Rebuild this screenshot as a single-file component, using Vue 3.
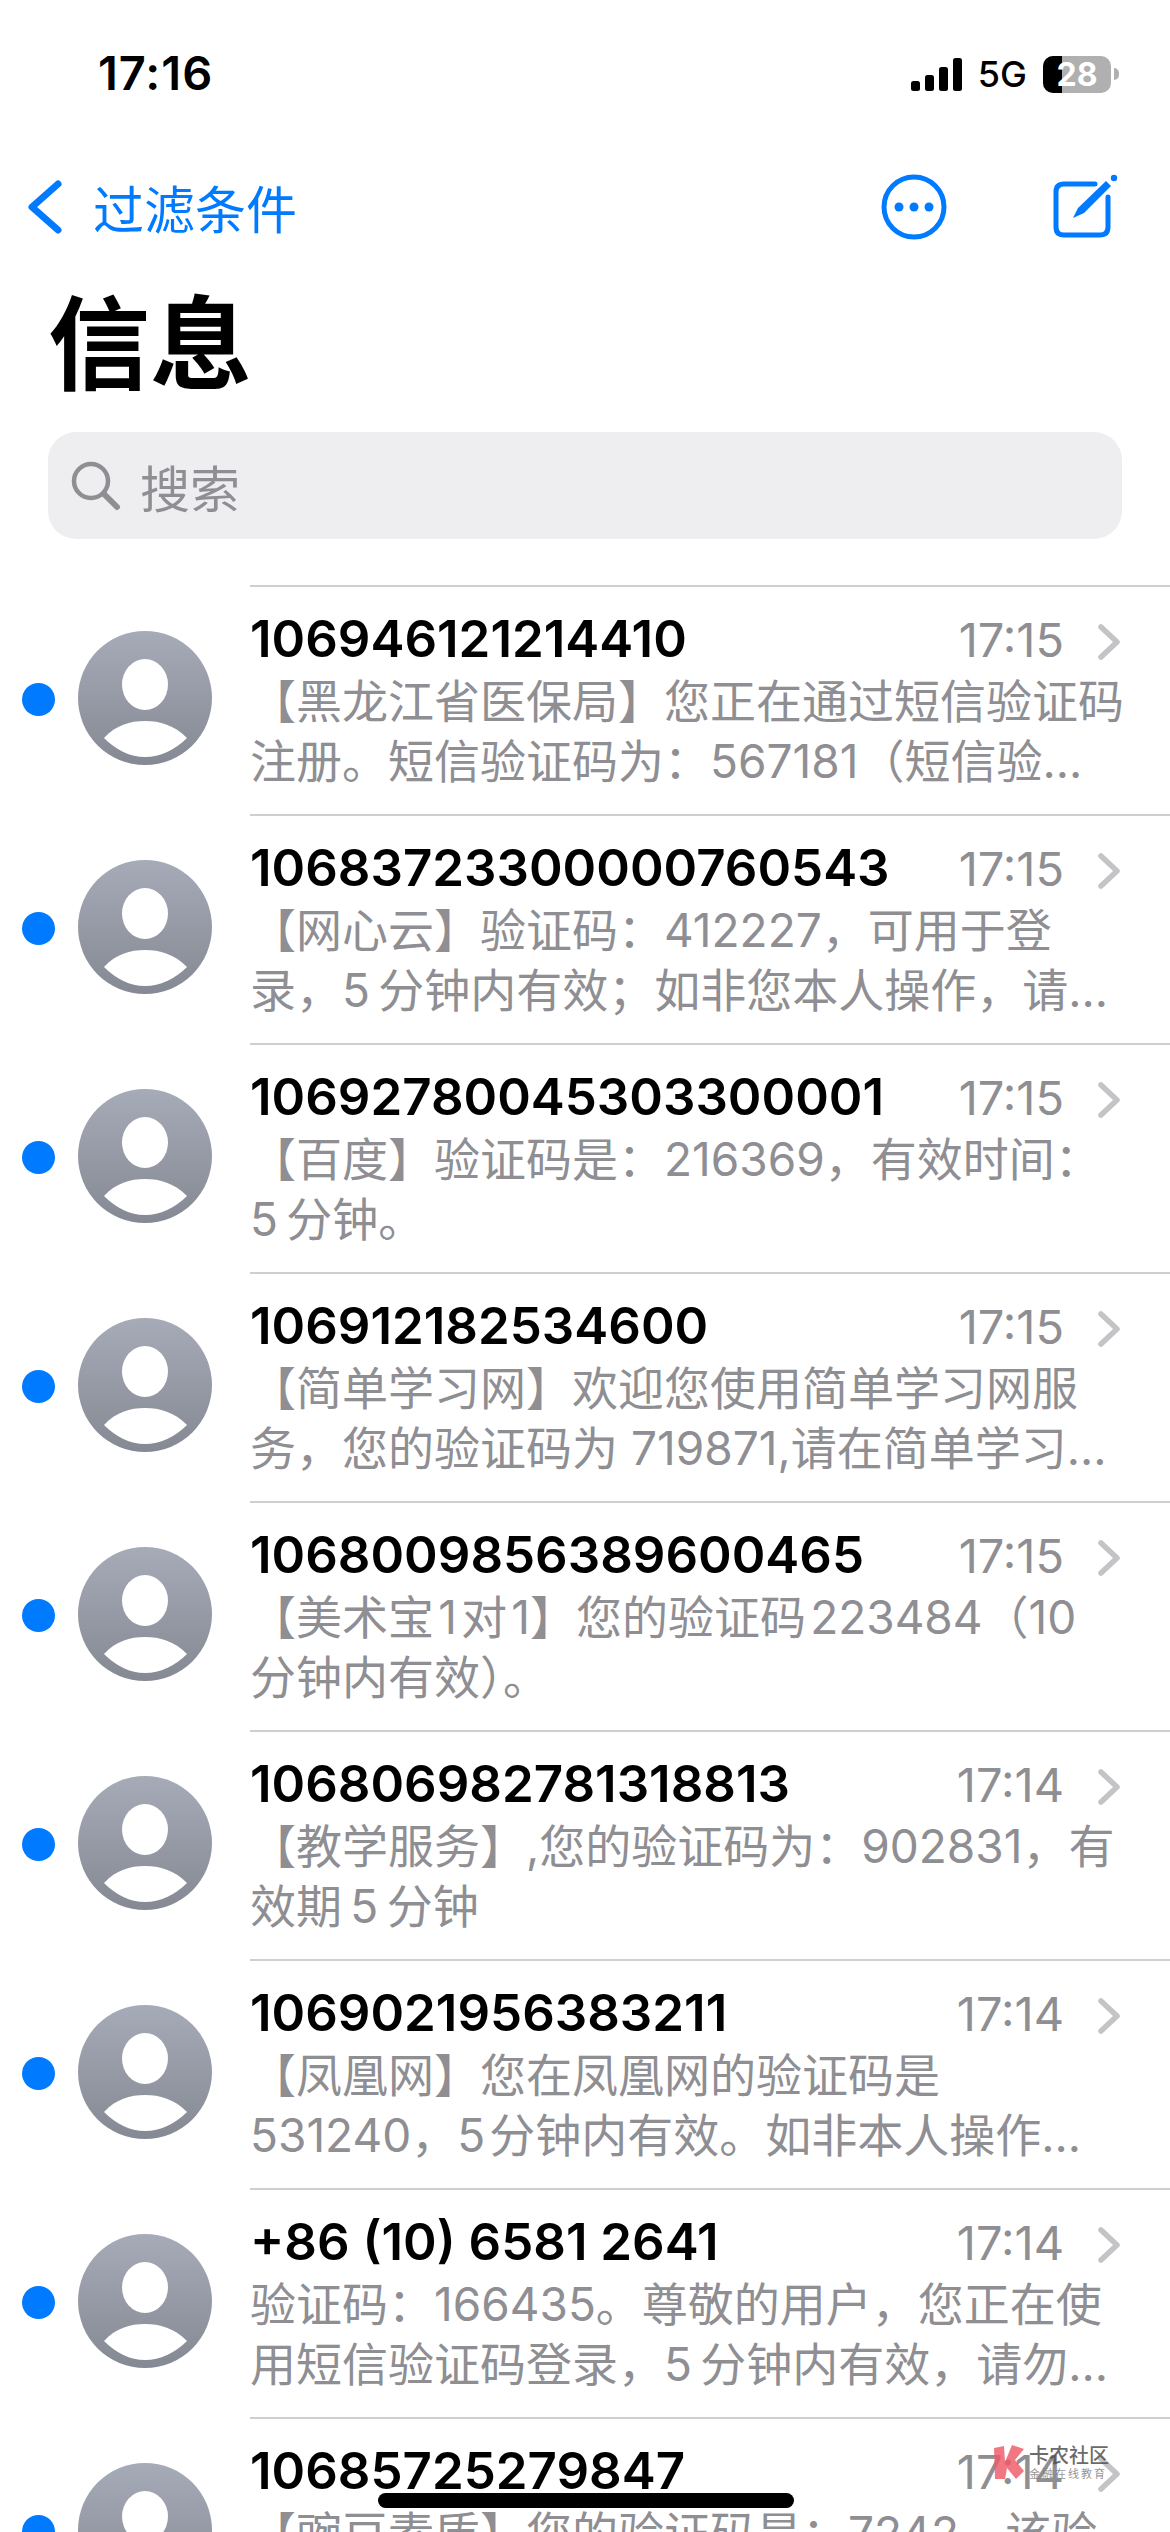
<script setup>
const rows = [
  { name: '106946121214410', time: '17:15', lines: ['【黑龙江省医保局】您正在通过短信验证码', '注册。短信验证码为：567181（短信验…'] },
  { name: '10683723300000760543', time: '17:15', lines: ['【网心云】验证码：412227，可用于登', '录，5\u2009分钟内有效；如非您本人操作，请…'] },
  { name: '10692780045303300001', time: '17:15', lines: ['【百度】验证码是：216369，有效时间：', '5\u2009分钟。'] },
  { name: '106912182534600', time: '17:15', lines: ['【简单学习网】欢迎您使用简单学习网服', '务，您的验证码为 719871,请在简单学习…'] },
  { name: '1068009856389600465', time: '17:15', lines: ['【美术宝\u200a1\u200a对\u200a1】您的验证码\u200a223484（10', '分钟内有效）。'] },
  { name: '106806982781318813', time: '17:14', lines: ['【教学服务】,您的验证码为：902831，有', '效期\u20095\u2009分钟'] },
  { name: '1069021956383211', time: '17:14', lines: ['【凤凰网】您在凤凰网的验证码是', '531240，5\u200a分钟内有效。如非本人操作…'] },
  { name: '+86 (10) 6581 2641', time: '17:14', lines: ['验证码：166435。尊敬的用户，您正在使', '用短信验证码登录，5\u2009分钟内有效，请勿…'] },
  { name: '10685725279847', time: '17:14', lines: ['【豌豆素质】您的验证码是：7242，该验'] },
]
</script>

<template>
  <div class="screen">
    <header class="status">
      <span class="clock">17:16</span>
      <div class="status-right">
        <svg class="signal" width="52" height="34" viewBox="0 0 52 34">
          <rect x="0" y="24" width="9" height="10" rx="2.5" />
          <rect x="14" y="18" width="9" height="16" rx="2.5" />
          <rect x="28" y="10" width="9" height="24" rx="2.5" />
          <rect x="42" y="1" width="9" height="33" rx="2.5" />
        </svg>
        <span class="net">5G</span>
        <div class="battery">
          <div class="battery-fill"></div>
          <span class="battery-num">28</span>
        </div>
        <i class="battery-tip"></i>
      </div>
    </header>

    <nav class="nav">
      <div class="back">
        <svg width="40" height="64" viewBox="0 0 40 64" fill="none">
          <path d="M34 9 L8 32 L34 55" stroke="#007aff" stroke-width="7" stroke-linecap="round" stroke-linejoin="round" />
        </svg>
        <span>过滤条件</span>
      </div>
      <div class="nav-actions">
        <svg width="66" height="66" viewBox="0 0 66 66" fill="none">
          <circle cx="33" cy="33" r="30" stroke="#007aff" stroke-width="5" />
          <circle cx="18" cy="33" r="4.5" fill="#007aff" />
          <circle cx="33" cy="33" r="4.5" fill="#007aff" />
          <circle cx="48" cy="33" r="4.5" fill="#007aff" />
        </svg>
        <svg width="68" height="70" viewBox="0 0 68 70" fill="none">
          <path d="M44 12 H13 Q5 12 5 20 V55 Q5 63 13 63 H49 Q57 63 57 55 V25" stroke="#007aff" stroke-width="5" stroke-linecap="round" />
          <path d="M22 46 L27 36 L55 9 L60 14 L33 41 Z" fill="#007aff" />
          <circle cx="63" cy="6" r="3.2" fill="#007aff" />
        </svg>
      </div>
    </nav>

    <h1 class="title">信息</h1>

    <div class="search">
      <svg width="52" height="52" viewBox="0 0 52 52" fill="none">
        <circle cx="21" cy="21" r="17" stroke="#8e8e93" stroke-width="4.5" />
        <path d="M34 34 L47 47" stroke="#8e8e93" stroke-width="6" stroke-linecap="round" />
      </svg>
      <span>搜索</span>
    </div>

    <ul class="list">
      <li v-for="row in rows" :key="row.name" class="row">
        <i class="dot"></i>
        <svg class="avatar" width="134" height="134" viewBox="0 0 134 134">
          <defs>
            <linearGradient id="avatarFill" x1="0" y1="0" x2="0" y2="1">
              <stop offset="0" stop-color="#a6abb8" />
              <stop offset="1" stop-color="#858993" />
            </linearGradient>
          </defs>
          <circle cx="67" cy="67" r="67" fill="url(#avatarFill)" />
          <ellipse cx="67" cy="53.5" rx="23" ry="25.5" fill="#fff" />
          <path d="M26 107 C38 94 52 90 67 90 C82 90 96 94 109 107 C97 119 82 126 67 126 C52 126 38 119 26 107 Z" fill="#fff" />
        </svg>
        <div class="body">
          <div class="top">
            <span class="name">{{ row.name }}</span>
            <span class="time">{{ row.time }}</span>
            <svg class="chev" width="28" height="40" viewBox="0 0 28 40" fill="none">
              <path d="M5 5 L21 20 L5 35" stroke="#c4c4c7" stroke-width="5.5" stroke-linecap="round" stroke-linejoin="round" />
            </svg>
          </div>
          <p v-for="line in row.lines" :key="line" class="line">{{ line }}</p>
        </div>
      </li>
    </ul>

    <div class="home"></div>
    <div class="mark">
      <svg width="34" height="37" viewBox="0 0 34 37">
        <path d="M2 4 L12 2 L13 18 L20 1 L32 5 L23 16 L32 27 L24 35 L15 24 L13 35 L3 35 Z" fill="#ee5a66" opacity=".82" />
      </svg>
      <div class="mark-text">
        <b>卡农社区</b>
        <small>金融在线教育</small>
      </div>
    </div>
  </div>
</template>

<style>
html, body { margin: 0; background: #fff; }
</style>

<style scoped>
.screen {
  position: relative;
  width: 1170px;
  height: 2532px;
  overflow: hidden;
  background: #fff;
  font-family: Inter, "Noto Sans CJK SC", sans-serif;
  color: #000;
}
.status {
  height: 150px;
  box-sizing: border-box;
  padding: 46px 51px 0 98px;
  display: flex;
  justify-content: space-between;
  align-items: flex-start;
}
.clock { font-size: 47px; line-height: 54px; font-weight: 600; letter-spacing: 1px; }
.status-right { display: flex; align-items: center; height: 56px; }
.signal { fill: #000; margin-right: 15px; }
.net { font-size: 36px; font-weight: 500; margin-right: 16px; }
.battery {
  position: relative;
  width: 68px;
  height: 37px;
  border-radius: 10px;
  background: #b0b0b0;
  overflow: hidden;
}
.battery-fill { width: 19px; height: 100%; background: #000; }
.battery-num {
  position: absolute;
  inset: 0;
  color: #fff;
  font-size: 32px;
  line-height: 37px;
  font-weight: 700;
  text-align: center;
}
.battery-tip {
  width: 5px;
  height: 12px;
  margin-left: 3px;
  border-radius: 0 6px 6px 0;
  background: #b0b0b0;
}
.nav {
  height: 114px;
  box-sizing: border-box;
  padding: 0 51px 0 24px;
  display: flex;
  justify-content: space-between;
  align-items: center;
}
.back { display: flex; align-items: center; gap: 29px; color: #007aff; font-size: 51px; }
.nav-actions { display: flex; align-items: center; gap: 104px; }
.title {
  margin: 0;
  padding-left: 48px;
  height: 168px;
  box-sizing: border-box;
  font-size: 102px;
  line-height: 162px;
  font-weight: 700;
}
.search {
  margin: 0 48px;
  height: 107px;
  box-sizing: border-box;
  padding: 0 22px;
  display: flex;
  align-items: center;
  gap: 18px;
  border-radius: 28px;
  background: #eeeef0;
  color: #8e8e93;
  font-size: 50px;
}
.list { list-style: none; margin: 0; padding: 0; }
.row {
  height: 229px;
  display: flex;
  align-items: center;
}
.row:first-child { margin-top: 46px; }
.dot {
  flex: none;
  width: 33px;
  height: 33px;
  margin-left: 22px;
  border-radius: 50%;
  background: #007aff;
}
.avatar { flex: none; margin: 0 0 4px 23px; }
.body {
  align-self: stretch;
  flex: 1;
  margin-left: 38px;
  padding: 20px 0 0;
  border-top: 2px solid #cfcfd1;
}
.top { display: flex; align-items: baseline; height: 64px; padding-right: 46px; }
.name { flex: 1; font-size: 51px; line-height: 64px; font-weight: 600; }
.time { font-size: 47px; color: #8e8e93; margin-right: 32px; }
.chev { flex: none; align-self: center; margin-top: 6px; }
.line {
  margin: 0;
  font-size: 46px;
  line-height: 60px;
  color: #8e8e93;
  white-space: nowrap;
}
.home {
  position: absolute;
  left: 378px;
  top: 2493px;
  width: 416px;
  height: 15px;
  border-radius: 8px;
  background: #000;
}
.mark {
  position: absolute;
  left: 992px;
  top: 2444px;
  display: flex;
  align-items: center;
  gap: 3px;
  color: rgba(80, 80, 80, .85);
}
.mark-text { display: flex; flex-direction: column; }
.mark-text b { font-size: 20px; line-height: 22px; font-weight: 500; }
.mark-text small { font-size: 11px; line-height: 14px; letter-spacing: 2px; color: rgba(120, 120, 120, .8); }
</style>
